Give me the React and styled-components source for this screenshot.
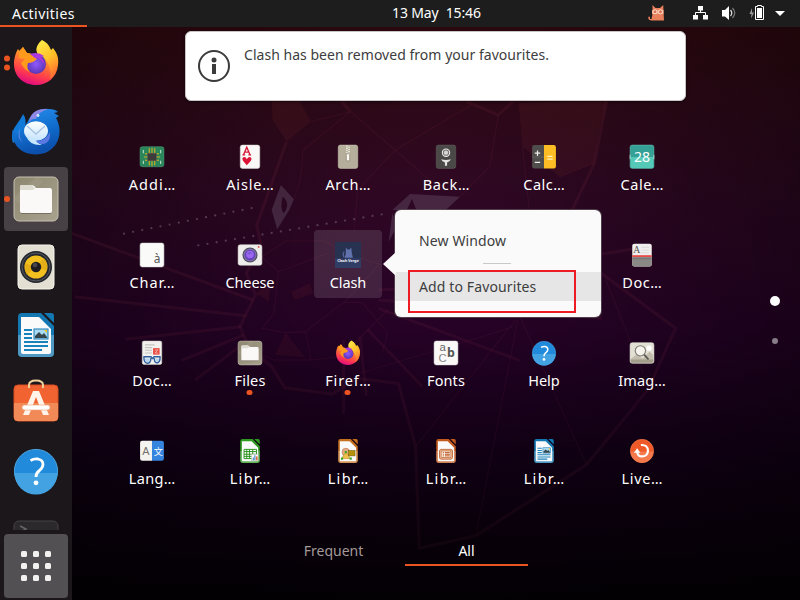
import React from 'react';
import styled, { createGlobalStyle } from 'styled-components';

const Global = createGlobalStyle`
  * { box-sizing: border-box; }
  body { margin: 0; overflow: hidden; background: #050005; }
`;

const Desktop = styled.div`
  position: relative;
  width: 800px;
  height: 600px;
  overflow: hidden;
  display: flex;
  flex-direction: column;
  color: #fff;
  font: 14px/20px 'Noto Sans', sans-serif;
  background:
    radial-gradient(ellipse 75% 85% at 54% 40%, rgba(0, 0, 0, 0) 12%, rgba(0, 0, 0, 0.62) 100%),
    linear-gradient(180deg, #370a10 0%, #330a17 12%, #2f0822 30%, #270228 55%, #150019 76%, #050006 100%);
`;

const Wallpaper = styled.svg`
  position: absolute;
  left: 72px;
  top: 80px;
  width: 728px;
  height: 520px;
  overflow: visible;
  fill: none;
  stroke: #8a3048;
  stroke-opacity: 0.14;
  mask-image: linear-gradient(180deg, #000 40%, rgba(0, 0, 0, 0.55) 85%);
  path { vector-effect: non-scaling-stroke; }
`;

const TopBar = styled.header`
  position: relative;
  height: 27px;
  flex: none;
  display: grid;
  grid-template-columns: 87px 1fr 152px;
  background: #1d1d1d;
`;

const Activities = styled.div`
  padding: 4px 0 0 12px;
  border-bottom: 2px solid #e95420;
  line-height: 19px;
  letter-spacing: 0.46px;
`;

const Clock = styled.div`
  padding: 3px 0 0 305px;
  white-space: pre;
  line-height: 20px;
  letter-spacing: -0.12px;
`;

const Tray = styled.svg`
  width: 152px;
  height: 27px;
`;

const Body = styled.div`
  position: relative;
  flex: 1;
  display: flex;
  min-height: 0;
`;

const Dock = styled.nav`
  width: 72px;
  padding: 4px 4px 2px;
  display: flex;
  flex-direction: column;
  gap: 4px;
  background: #1c171a;
`;

const DockItem = styled.div`
  position: relative;
  height: 64px;
  flex: none;
  display: flex;
  align-items: center;
  justify-content: center;
  border-radius: 4px;
  background: ${(p) => (p.$active ? '#474145' : 'transparent')};
`;

const DockClip = styled(DockItem)`
  height: 23px;
  align-items: flex-start;
  padding-top: 12px;
  overflow: hidden;
`;

const AppsButton = styled(DockItem)`
  background: #525052;
`;

const DotGrid = styled.div`
  display: grid;
  grid-template-columns: repeat(3, 6px);
  gap: 6px;
`;

const DotCell = styled.i`
  height: 6px;
  border-radius: 1.5px;
  background: #f1f1f0;
`;

const Running = styled.div`
  position: absolute;
  left: 0;
  top: 50%;
  transform: translateY(-50%);
  display: flex;
  flex-direction: column;
  gap: 3px;
`;

const RunDot = styled.i`
  width: 6px;
  height: 6px;
  border-radius: 50%;
  background: #e95420;
`;

const Glyph = styled.svg`
  display: block;
  flex: none;
  width: ${(p) => p.$size}px;
  height: ${(p) => p.$size}px;
  overflow: visible;
`;

const Overview = styled.main`
  position: relative;
  flex: 1;
  display: flex;
  flex-direction: column;
`;

const AppGrid = styled.div`
  display: grid;
  grid-template-columns: repeat(6, 68px);
  grid-auto-rows: 68px;
  gap: 30px;
  padding: 105px 0 0 46px;
`;

const AppCell = styled.div`
  position: relative;
  display: flex;
  flex-direction: column;
  align-items: center;
  gap: 4px;
  padding-top: 12px;
  border-radius: 4px;
  background: ${(p) => (p.$selected ? 'rgba(255,255,255,.12)' : 'transparent')};
`;

const Label = styled.span`
  font-size: 14.5px;
  line-height: 20px;
  white-space: nowrap;
  letter-spacing: ${(p) => p.$track || 0}px;
  margin-right: ${(p) => -(p.$track || 0)}px;
`;

const CellDot = styled(RunDot)`
  position: absolute;
  left: 29px;
  bottom: 1px;
  transform: translateX(1.5px);
  width: 5.5px;
  height: 5.5px;
`;

const Pager = styled.div`
  position: absolute;
  right: 20px;
  top: 269px;
  width: 10px;
  display: flex;
  flex-direction: column;
  align-items: center;
  gap: 32px;
`;

const PageDot = styled.i`
  width: ${(p) => (p.$on ? 10 : 6)}px;
  height: ${(p) => (p.$on ? 10 : 6)}px;
  border-radius: 50%;
  background: ${(p) => (p.$on ? '#fff' : '#887c88')};
`;

const Tabs = styled.div`
  display: flex;
  gap: 10px;
  padding: 45px 0 0 200px;
`;

const Tab = styled.div`
  width: 123px;
  height: 27px;
  padding-top: 2px;
  text-align: center;
  color: ${(p) => (p.$on ? '#fff' : '#a49a98')};
  border-bottom: 2px solid ${(p) => (p.$on ? '#e95420' : 'transparent')};
`;

const Toast = styled.aside`
  position: absolute;
  left: 113px;
  top: 4px;
  width: 501px;
  height: 70px;
  padding: 14px 12px;
  display: flex;
  align-items: flex-start;
  gap: 14px;
  border: 1px solid #c9c4c4;
  border-radius: 6px;
  background: #fff;
  color: #3d3d3d;
  box-shadow: 0 1px 3px rgba(0, 0, 0, 0.5);
  svg { margin-top: 4px; }
`;

const ToastText = styled.p`
  margin: 0;
  line-height: 18px;
  white-space: nowrap;
  letter-spacing: 0.03px;
`;

const Menu = styled.div`
  position: absolute;
  left: 323px;
  top: 183px;
  width: 206px;
  height: 107px;
  padding-top: 14px;
  border-radius: 6px;
  background: #fafafa;
  color: #3d3d3d;
  box-shadow: 0 0 0 1px rgba(90, 75, 85, 0.8);
`;

const MenuArrow = styled.svg`
  position: absolute;
  left: -12px;
  top: 42px;
  width: 13px;
  height: 24px;
`;

const MenuItem = styled.div`
  height: ${(p) => (p.$hover ? 29 : 33)}px;
  line-height: ${(p) => (p.$hover ? 29 : 33)}px;
  padding-left: 24px;
  background: ${(p) => (p.$hover ? '#e6e6e6' : 'transparent')};
  letter-spacing: 0.12px;
`;

const Separator = styled.hr`
  width: 28px;
  height: 1px;
  margin: 6px 0 8px 88px;
  border: 0;
  background: #c9c9c9;
`;

const Highlight = styled.div`
  position: absolute;
  left: 13px;
  top: 60px;
  width: 168px;
  height: 43px;
  border: 2px solid #ed1c24;
`;

const Firefox = () => (
  <>
    <path d="M24 46C11 46 2 37 2 25C2 19 4 13 6 10L8 13L11 8L15 14L20 15L24 18L30 2C36 5 37 10 38 12L41 9C45 14 47 19 46 26C45 38 36 46 24 46Z" fill="url(#ffFlame)" />
    <path d="M30 1C39 5 38 12 42 16C47 22 46 34 38 40C40 30 36 21 29 17C21 13 25 5 30 1Z" fill="url(#ffYellow)" />
    <circle cx="24" cy="25" r="10" fill="url(#ffPurple)" />
    <path d="M7 12L11 8L15 14Q20 14 22 18L25 20Q21 24 16 24Q14 29 18 33Q12 31 9 24L13 20L7 19Z" fill="#ff9a1d" />
    <path d="M18 15Q26 12 32 17L29 18Q32 21 33 27Q29 19 23 19Z" fill="#ab38de" />
  </>
);

const Thunderbird = () => (
  <>
    <path d="M1 36C-3 22 7 17 11 7Q15 12 13 21L10 31Z" fill="#1179d7" />
    <path d="M0.500 23L6 27Q12 22 17 12Q24 0 37 2Q43 2 46 5L42 6L47 9L44 11C51 23 48 40 33 46C17 51 -1 43 0.500 23Z" fill="url(#tbBlue)" />
    <path d="M17 15Q19 1 36 2Q26 5 24 12Q20 11 17 15Z" fill="#8e87e5" />
    <circle cx="26" cy="8.500" r="1.400" fill="#d7eaff" />
    <ellipse cx="24" cy="24" rx="12" ry="9.800" fill="url(#mailWhite)" />
    <path d="M14 29Q20 31 23 31Q24 36 30 38Q18 39 14 29Z" fill="#c8e6ff" />
    <path d="M15 19L24 27L33 19" fill="none" stroke="#a9c5e3" strokeWidth="1.400" />
    <path d="M24 34Q34 34 38 25Q39 38 28 37Z" fill="#5c78e2" />
    <path d="M8 20Q6 31 11 36Q4 31 8 20Z" fill="#9794ef" opacity=".7" />
  </>
);

const Files = () => (
  <>
    <rect x="2" y="2" width="44" height="44" rx="5" fill="url(#beige)" stroke="#c6c1b1" />
    <path d="M4 26L28 4" stroke="#aca592" strokeWidth="8" opacity=".3" />
    <path d="M8 15V12Q8 10 10 10H20Q22 10 24 13H38Q40 13 40 16V36Q40 38 38 38H10Q8 38 8 36Z" fill="#faf9f7" />
    <path d="M8 15V12Q8 10 10 10H20L23 14L20 15Z" fill="#dedbd1" />
    <path d="M9 38.5H39" stroke="#777161" />
  </>
);

const Rhythmbox = () => (
  <>
    <rect x="6" y="2" width="36" height="44" rx="4" fill="#e3dfd2" stroke="#f6f4ec" />
    <circle cx="24" cy="24" r="16" fill="#25282f" />
    <circle cx="24" cy="24" r="14" fill="none" stroke="#61656e" strokeWidth=".8" />
    <circle cx="24" cy="24" r="11.5" fill="#f3c11f" />
    <path d="M24 24L15 32Q12 28 13 20Z M24 24L32 15Q36 20 35 28Z" fill="#dda713" opacity=".7" />
    <circle cx="24" cy="24" r="5.2" fill="#1d1d20" />
    <circle cx="23" cy="22" r="2.3" fill="#46484e" />
  </>
);

const docColors = {
  writer: '#1377b1',
  calc: '#2d9a20',
  draw: '#c4701d',
  impress: '#c2591d',
};

const Libre = ({ kind }) => {
  const c = docColors[kind];
  return (
    <>
      <path d="M10 2H29L42 15V42Q42 46 38 46H10Q6 46 6 42V6Q6 2 10 2Z" fill={c} />
      <path d="M6 24H42V42Q42 46 38 46H10Q6 46 6 42Z" fill="#fff" opacity=".25" />
      <path d="M32 2H39Q42 2 42 5V12Z" fill={c} />
      <path d="M9 6H27L39 18V41Q39 43 37 43H11Q9 43 9 41Z" fill="#fafafa" />
      {kind === 'writer' && (
        <>
          <path d="M12 19H20M12 23H20M12 27H20M12 31H36M12 35H36M12 39H30" stroke="#1b83bc" strokeWidth="2" />
          <rect x="22" y="18" width="14" height="10" fill="#a8daf3" stroke="#1779b2" />
          <path d="M23 27V25L27 21L30 24L32 22L35 26V27Z" fill="#34464b" />
          <path d="M32 19H35V22Z" fill="#f1c21c" />
        </>
      )}
      {kind === 'calc' && (
        <>
          <path d="M13 21H36V38H13ZM13 25H36M13 30H36M13 34H36M18 21V38M23 21V38M29 21V38" fill="none" stroke="#249117" strokeWidth="1.7" />
          <rect x="27" y="30" width="12" height="12" fill="#fff" stroke="#bbb" />
          <path d="M29 41V36H31V41M32 41V32H34V41" fill="#377dc0" />
          <path d="M35 41V34H38V41Z" fill="#e26939" />
        </>
      )}
      {kind === 'draw' && (
        <>
          <circle cx="20" cy="26" r="7" fill="#e7ac83" stroke="#b2613a" />
          <path d="M12 38L20 26L29 38Z" fill="#edc04b" stroke="#bb8320" />
          <rect x="25" y="23" width="12" height="10" fill="#b59208" stroke="#76600a" />
          <path d="M11 36H15V40H11ZM27 36H31V40H27ZM18 24H22V28H18Z" fill="#39a72c" />
        </>
      )}
      {kind === 'impress' && (
        <>
          <rect x="12" y="21" width="24" height="18" rx="3" fill="#f3bd98" stroke="#b75a2b" strokeWidth="1.5" />
          <rect x="15" y="24" width="18" height="12" fill="#fff4e7" stroke="#a84815" />
          <path d="M18 27H20M22 27H31M18 30H20M22 30H31M18 33H20M22 33H31" stroke="#b74f1e" strokeWidth="1.8" />
        </>
      )}
    </>
  );
};

const Software = () => (
  <>
    <rect x="2" y="6" width="44" height="36" rx="4" fill="#f16432" stroke="#d84c21" />
    <path d="M2 24H46V38Q46 42 42 42H6Q2 42 2 38Z" fill="#f28a58" />
    <path d="M17 9V6Q17 1.500 24 1.500T31 6V9" fill="none" stroke="#f0d09c" strokeWidth="2" />
    <path d="M21 12H27L37 36H31L24 18L17 36H11Z" fill="#fff3ea" />
    <rect x="10" y="26" width="28" height="5" rx="2.5" fill="#fff" stroke="#ed9a71" strokeWidth=".6" />
  </>
);

const Help = () => (
  <>
    <circle cx="24" cy="24" r="21.6" fill="#218ada" stroke="#4aa2df" />
    <path d="M2.400 26A21.600 21.600 0 0 0 45.600 26Z" fill="#43a3e2" />
    <path d="M18.500 13.500Q22 11.500 26 12Q31 13 31 17.500Q31 20.500 27.500 23.500Q24 26 24 30" fill="none" stroke="#fff" strokeWidth="2.8" />
    <circle cx="24" cy="35.800" r="2.4" fill="#fff" />
  </>
);

const TerminalTop = () => (
  <>
    <rect x="2" y="2" width="44" height="44" rx="5" fill="#2c292c" stroke="#454246" />
    <path d="M8 7L14 10L8 13" fill="none" stroke="#67636a" strokeWidth="1.5" />
  </>
);

const Driver = () => (
  <>
    <rect x="2" y="5" width="44" height="37" rx="4" fill="#28865a" stroke="#51a17a" />
    <path d="M19 8V39M24 7V41M29 8V39M11 18H37M9 24H39M11 30H37" stroke="#d9ae27" strokeWidth="2" />
    <rect x="16" y="17" width="16" height="14" fill="#3e3b3b" stroke="#555" />
    <path d="M8 11V17M40 11V17M8 31V37M40 31V37" stroke="#bddfcf" strokeWidth="2" />
  </>
);

const Ace = () => (
  <>
    <rect x="6" y="2" width="36" height="43" rx="4" fill="#faf9f7" stroke="#dad7d0" />
    <path d="M12 20L18 6L24 20M14 15H22M10 20H15M21 20H26" fill="none" stroke="#d81b39" strokeWidth="2.5" />
    <path d="M18 39L11 31Q8 25 13 24Q17 24 18 28Q20 24 24 24Q29 26 25 32Z" fill="#dc1537" />
  </>
);

const Archive = () => (
  <>
    <rect x="6" y="2" width="36" height="43" rx="4" fill="#b5ae9a" stroke="#cec9b9" />
    <path d="M22 3V21M26 5V21" stroke="#f3f0e7" strokeWidth="3" strokeDasharray="2 2" />
    <path d="M21 18H27V31H21Z" fill="#fbf8f0" stroke="#777064" />
  </>
);

const Backup = () => (
  <>
    <rect x="6" y="2" width="36" height="43" rx="4" fill="#4b4947" stroke="#64605c" />
    <circle cx="24" cy="16" r="6.8" fill="#706d6a" stroke="#eee" strokeWidth="2" />
    <circle cx="24" cy="16" r="4" fill="#d7d6d3" />
    <path d="M15 28Q24 31 33 28Q31 33 26 34V40H22V34Q17 33 15 28Z" fill="#e5e4e1" />
  </>
);

const Calculator = () => (
  <>
    <path d="M6 2H24V45H6Q2 45 2 41V6Q2 2 6 2Z" fill="#504e4c" />
    <path d="M24 2H42Q46 2 46 6V41Q46 45 42 45H24Z" fill="#fdbd24" />
    <path d="M2 24H24" stroke="#706d69" />
    <path d="M7 17H17M12 12V22M7 34H17" stroke="#efefeb" strokeWidth="2.2" />
    <path d="M30 23H40M30 28H40" stroke="#fff3bd" strokeWidth="2.3" />
  </>
);

const Calendar = () => (
  <>
    <rect x="2" y="2" width="44" height="43" rx="4" fill="#35a096" stroke="#6bc4b8" />
    <path d="M3 24H45V41Q45 44.500 41 44.500H7Q3 44.500 3 41Z" fill="#55c9b8" />
    <path d="M2 20V28M46 20V28" stroke="#dff8f3" strokeWidth="1.2" />
    <text x="24" y="33" textAnchor="middle" fill="#fff" fontSize="26" fontFamily="Noto Sans, sans-serif">28</text>
  </>
);

const Characters = () => (
  <>
    <rect x="2" y="2" width="44" height="44" rx="4" fill="#fafaf9" stroke="#dedddd" />
    <text x="27" y="38" fill="#555" fontSize="22" fontFamily="Noto Sans, sans-serif">à</text>
  </>
);

const Cheese = () => (
  <>
    <rect x="2" y="5" width="44" height="38" rx="4" fill="#efeeec" stroke="#d5d4d1" />
    <circle cx="24" cy="24" r="14" fill="#4c4b5b" />
    <circle cx="24" cy="24" r="12" fill="#8277a0" />
    <circle cx="24" cy="24" r="10" fill="#6841c1" />
    <circle cx="24" cy="23" r="7" fill="#9b67ef" />
    <path d="M19 22Q22 17 27 19L24 23Z" fill="#7958cf" />
    <circle cx="40" cy="9" r="1.7" fill="#e44d46" />
  </>
);

const ClashIcon = () => (
  <>
    <rect width="48" height="48" fill="#273250" />
    <path d="M0 30H48V48H0Z" fill="#303d65" />
    <path d="M20 10L23 14H27L30 10L31 20L33 29H18L20 21Z" fill="#6272ad" />
    <path d="M17 28Q13 23 17 18" fill="none" stroke="#5f6da8" strokeWidth="2" />
    <text x="24" y="37" textAnchor="middle" fill="#ecedf5" fontSize="7.5" fontWeight="bold" fontFamily="Noto Sans, sans-serif" textLength="40">Clash Verge</text>
  </>
);

const Scanner = () => (
  <>
    <rect x="6" y="3" width="36" height="42" rx="4" fill="#f0efed" />
    <path d="M6 26H42V41Q42 45 38 45H10Q6 45 6 41Z" fill="#8a8985" />
    <text x="8" y="21" fill="#555" fontSize="18" fontFamily="Liberation Serif, serif">A</text>
    <path d="M23 10H37M23 15H37M23 20H37" stroke="#d4d3cf" strokeWidth="1.2" />
    <path d="M6 26H42" stroke="#e94d4b" strokeWidth="3.4" />
    <path d="M6 31H42" stroke="#6e6d6b" strokeWidth="1.4" />
  </>
);

const Evince = () => (
  <>
    <rect x="6" y="2" width="36" height="43" rx="3" fill="#f1f0ed" stroke="#d6d4cf" />
    <path d="M11 9H29M11 14H24M11 19H24M11 24H24" stroke="#c6c3bd" strokeWidth="2" />
    <rect x="26" y="15" width="12" height="12" fill="#e54d44" />
    <path d="M29 19L35 18L30 24H35" fill="none" stroke="#ffc0b8" strokeWidth="1.3" />
    <path d="M8 31H22L25 34L28 31H40M9 32Q9 43 16 43Q22 42 22 33M28 33Q28 42 34 42Q39 41 39 32" fill="none" stroke="#2e609e" strokeWidth="2.6" />
    <path d="M11 34H20Q20 40 16 41Q11 40 11 34M30 34H37Q37 39 34 40Q30 39 30 34" fill="#b5d3ee" />
  </>
);

const FontsIcon = () => (
  <>
    <rect x="2" y="2" width="44" height="44" rx="4" fill="#faf9f8" stroke="#dfdedb" />
    <text x="12" y="20" fill="#666" fontSize="21" fontFamily="Liberation Sans, sans-serif">a</text>
    <text x="10" y="40" fill="#888" fontSize="21" fontFamily="Liberation Sans, sans-serif">C</text>
    <text x="26" y="32" fill="#555" fontSize="23" fontWeight="bold" fontFamily="Noto Sans, sans-serif">b</text>
  </>
);

const ImageViewer = () => (
  <>
    <rect x="2" y="5" width="44" height="38" rx="4" fill="#e2dfd4" stroke="#f1eee5" />
    <path d="M3 35L15 26L25 34L38 21L45 28V39Q45 42 41 42H6Q3 42 3 38Z" fill="#c2bdad" />
    <path d="M3 36H45V39Q45 42 41 42H6Q3 42 3 39Z" fill="#a39d8b" />
    <circle cx="37" cy="15" r="5" fill="#fff" />
    <circle cx="21" cy="20" r="9.5" fill="#f5f3ed" stroke="#7f7b73" strokeWidth="2" />
    <path d="M28 27L36 36" stroke="#5a5852" strokeWidth="3.4" />
  </>
);

const Languages = () => (
  <>
    <path d="M6 5H24V42H6Q2 42 2 38V9Q2 5 6 5Z" fill="#f4f3f0" />
    <path d="M24 5H42Q46 5 46 9V38Q46 42 42 42H24Z" fill="#3585df" />
    <text x="6" y="31" fill="#74716c" fontSize="20" fontFamily="Liberation Sans, sans-serif">A</text>
    <text x="27" y="31" fill="#fff" fontSize="17" fontFamily="Noto Sans CJK SC, sans-serif">文</text>
  </>
);

const Livepatch = () => (
  <>
    <circle cx="24" cy="24" r="21.5" fill="#f05a29" stroke="#f58257" />
    <path d="M3 25A21 21 0 0 0 45 25Z" fill="#f47a4d" />
    <path d="M22 13Q35 12 35 24Q34 34 24 34Q16 34 15 25" fill="none" stroke="#fff" strokeWidth="4" />
    <path d="M9 27L15 19L21 27Z" fill="#fff" />
  </>
);

const Icon = ({ size = 26, children }) => (
  <Glyph $size={size} viewBox="0 0 48 48">{children}</Glyph>
);

const dock = [
  { art: <Firefox />, dots: 2 },
  { art: <Thunderbird /> },
  { art: <Files />, dots: 1, active: true },
  { art: <Rhythmbox /> },
  { art: <Libre kind="writer" /> },
  { art: <Software /> },
  { art: <Help /> },
];

const apps = [
  { name: 'Addi…', art: <Driver />, track: 1 },
  { name: 'Aisle…', art: <Ace />, track: 0.85 },
  { name: 'Arch…', art: <Archive />, track: 0.7 },
  { name: 'Back…', art: <Backup />, track: 0.75 },
  { name: 'Calc…', art: <Calculator />, track: 0.5 },
  { name: 'Cale…', art: <Calendar />, track: 0.6 },
  { name: 'Char…', art: <Characters />, track: 0.9 },
  { name: 'Cheese', art: <Cheese />, track: -0.1 },
  { name: 'Clash', art: <ClashIcon />, selected: true, track: -0.1 },
  null,
  null,
  { name: 'Doc…', art: <Scanner />, track: 0.6 },
  { name: 'Doc…', art: <Evince />, track: 0.6 },
  { name: 'Files', art: <Files />, running: true, track: 0.2 },
  { name: 'Firef…', art: <Firefox />, running: true, track: 0.85 },
  { name: 'Fonts', art: <FontsIcon />, track: 0.1 },
  { name: 'Help', art: <Help />, track: -0.1 },
  { name: 'Imag…', art: <ImageViewer />, track: 0.15 },
  { name: 'Lang…', art: <Languages />, track: 0.4 },
  { name: 'Libr…', art: <Libre kind="calc" />, track: 1.3 },
  { name: 'Libr…', art: <Libre kind="draw" />, track: 1.3 },
  { name: 'Libr…', art: <Libre kind="impress" />, track: 1.3 },
  { name: 'Libr…', art: <Libre kind="writer" />, track: 1.3 },
  { name: 'Live…', art: <Livepatch />, track: 0.7 },
];

function Backdrop() {
  return (
    <Wallpaper viewBox="0 0 1568 1560" preserveAspectRatio="none">
      <defs>
        <linearGradient id="ffFlame" x1=".7" y1="0" x2=".35" y2="1">
          <stop offset="0" stopColor="#ffe226" /><stop offset=".4" stopColor="#ff9128" /><stop offset=".75" stopColor="#ff3d4c" /><stop offset="1" stopColor="#e00884" />
        </linearGradient>
        <linearGradient id="ffYellow" x1="0" y1="0" x2=".4" y2="1">
          <stop offset="0" stopColor="#fff04c" /><stop offset=".6" stopColor="#ffc12a" /><stop offset="1" stopColor="#ff7a2e" />
        </linearGradient>
        <radialGradient id="ffPurple"><stop offset="0" stopColor="#9059ff" /><stop offset="1" stopColor="#5b36b5" /></radialGradient>
        <linearGradient id="tbBlue" x1="0" y1="0" x2=".3" y2="1"><stop offset="0" stopColor="#2a91ef" /><stop offset=".55" stopColor="#116fcf" /><stop offset="1" stopColor="#0c50ac" /></linearGradient>
        <linearGradient id="mailWhite" x1="0" y1="0" x2="0" y2="1"><stop offset="0" stopColor="#fff" /><stop offset="1" stopColor="#c4e4ff" /></linearGradient>
        <linearGradient id="beige" x1="0" y1="0" x2="1" y2="1"><stop offset="0" stopColor="#8d866f" /><stop offset="1" stopColor="#a8a28f" /></linearGradient>
      </defs>
      <path d="M430 60L432 120L462 185L514 125L490 60ZM962 70L970 200L1050 290L1125 250L1135 150L1152 60ZM395 640L428 605L424 664ZM472 635L512 610L520 640L480 660ZM460 758L437 824L502 832Z" fill="#a13b35" fillOpacity=".1" stroke="none" />
      <path d="M450 315L478 358L468 390L442 448L430 390ZM454 350Q447 385 456 400Q472 370 454 350ZM728 342L836 350L805 390L690 390ZM732 357L722 388H741ZM690 400L682 485L700 440Z" fill="#94899f" fillOpacity=".24" fillRule="evenodd" stroke="none" />
      <path d="M462 185L398 435L408 500L375 580L395 645L362 740L380 800L430 860L458 923L560 942L615 895L703 910L740 1100L748 1405L870 1367L1108 1154L1240 930L1300 745L1140 580M1152 60L1125 250L1060 440M580 65L600 95M850 65L918 105L950 65" strokeWidth="3.2" />
      <path d="M0 460L390 660M6 650L375 707M115 778L365 740M235 842L370 765M265 900L375 785M660 685L965 842M636 748L755 920M620 770L634 948M585 780V1003M660 630L900 610M660 660L1142 715M1060 540L1240 500" strokeWidth="3" />
      <path d="M514 125L600 95L498 210L492 300L478 358M600 95L770 300M918 105L900 260L836 350M860 75L696 210L615 330L608 450M398 540L460 483H545L590 520L668 555M400 520L445 575L550 520M445 575L435 700L410 745L460 758L503 755L585 667L605 640L660 555M585 667H625L680 760L668 820M503 755L515 840L435 840L410 825M515 840L580 830L680 690M950 740L895 765L620 880M955 720L740 1100M960 720L870 1367M965 710L1108 1154M1150 600L1230 880M970 200L985 390M1125 250L1050 290" strokeWidth="1.1" />
      <path d="M112 461L395 382M272 496L672 402" stroke="#a296a7" strokeOpacity=".36" strokeWidth="2.3" strokeLinecap="round" strokeDasharray="0 9.3" />
    </Wallpaper>
  );
}

function StatusTray() {
  return (
    <Tray viewBox="0 0 152 27">
      <path d="M4.500 5L7.500 8H12L15.200 5L16 20.500H4Q0 20.500 .3 17.500Q.7 16 2 17V19H3.500L4.500 14Z" fill="#e8805c" />
      <path d="M4 10H15.500V14H4Z" fill="#f2a283" />
      <circle cx="7" cy="11.800" r="2" fill="#d9704f" stroke="#ffe0d0" />
      <circle cx="12.500" cy="11.800" r="2" fill="#d9704f" stroke="#ffe0d0" />
      <path d="M50 6H55V10.500H50ZM45 15H50V19.500H45ZM55 15H60V19.500H55Z" fill="#fff" />
      <path d="M52.500 10V13M47.500 15.500V12.500H57.500V15.500" fill="none" stroke="#fff" />
      <path d="M74 10H77L81 6V20L77 16.500H74Z" fill="#fff" />
      <path d="M82.500 10Q85 13 82.500 16" fill="none" stroke="#ddd" strokeWidth="1.3" />
      <path d="M84.500 8Q89 13 84.500 18" fill="none" stroke="#777" strokeWidth="1.2" />
      <path d="M104 8L101.500 14H103.500L103 18.500L106 12.500H104Z" fill="#999" />
      <path d="M107.500 6.500H109.500V5.500H113.500V6.500H115.500V19.500H107.500Z" fill="none" stroke="#fff" />
      <rect x="109" y="8" width="5" height="10" fill="#fff" />
      <path d="M127 11H137L132 16Z" fill="#fff" />
    </Tray>
  );
}

export default function App() {
  return (
    <Desktop>
      <Global />
      <Backdrop />
      <TopBar>
        <Activities>Activities</Activities>
        <Clock>13 May  15:46</Clock>
        <StatusTray />
      </TopBar>
      <Body>
        <Dock>
          {dock.map((d, i) => (
            <DockItem key={i} $active={d.active}>
              <Icon size={48}>{d.art}</Icon>
              {d.dots && (
                <Running>{Array.from({ length: d.dots }, (_, n) => <RunDot key={n} />)}</Running>
              )}
            </DockItem>
          ))}
          <DockClip><Icon size={48}><TerminalTop /></Icon></DockClip>
          <AppsButton>
            <DotGrid>{Array.from({ length: 9 }, (_, i) => <DotCell key={i} />)}</DotGrid>
          </AppsButton>
        </Dock>
        <Overview>
          <AppGrid>
            {apps.map((a, i) => a ? (
              <AppCell key={i} $selected={a.selected}>
                <Icon>{a.art}</Icon>
                <Label $track={a.track}>{a.name}</Label>
                {a.running && <CellDot />}
              </AppCell>
            ) : <AppCell key={i} />)}
          </AppGrid>
          <Tabs>
            <Tab>Frequent</Tab>
            <Tab $on>All</Tab>
          </Tabs>
          <Pager><PageDot $on /><PageDot /></Pager>
          <Toast>
            <Glyph $size={32} viewBox="0 0 32 32">
              <circle cx="16" cy="16" r="15" fill="none" stroke="#3b3b3b" strokeWidth="2" />
              <circle cx="16" cy="10" r="2.5" fill="#3b3b3b" />
              <path d="M14 14H18V24H14Z" fill="#3b3b3b" />
            </Glyph>
            <ToastText>Clash has been removed from your favourites.</ToastText>
          </Toast>
          <Menu>
            <MenuArrow viewBox="0 0 13 24"><path d="M13 0L0 12L13 24Z" fill="#fafafa" /></MenuArrow>
            <MenuItem>New Window</MenuItem>
            <Separator />
            <MenuItem $hover>Add to Favourites</MenuItem>
            <Highlight />
          </Menu>
        </Overview>
      </Body>
    </Desktop>
  );
}
